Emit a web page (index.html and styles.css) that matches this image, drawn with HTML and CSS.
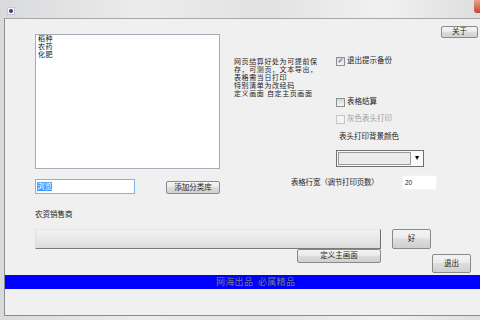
FILE: index.html
```html
<!DOCTYPE html>
<html lang="zh">
  <head>
    <meta charset="UTF-8" />
    <title>农资结算</title>
    <link rel="stylesheet" href="styles.css">
  </head>
  <body>
    <div class="window">
      <!-- Title bar -->
      <div class="titlebar">
        <span class="app-icon"><span class="app-dot"></span></span>
        <span class="close-btn"></span>
      </div>

      <!-- Client area -->
      <div class="client">
        <div class="top">
          <div class="list">
            <div class="item">稻种</div>
            <div class="item">农药</div>
            <div class="item">化肥</div>
          </div>
          <div class="notes">
            <div class="note-line">网页结算好处为可提前保</div>
            <div class="note-line">存，可测页，文本导出，</div>
            <div class="note-line">表格需当日打印</div>
            <div class="note-line">特别清单为改经码</div>
            <div class="note-line">定义画面 自定主页画面</div>
          </div>
          <div class="options">
            <label class="check first"><span class="box checked">✓</span>退出提示备份</label>
            <label class="check second"><span class="box"></span>表格结算</label>
            <label class="check third disabled"><span class="box"></span>灰色表头打印</label>
            <div class="combo-label">表头打印背景颜色</div>
            <div class="combo">
              <span class="combo-field"></span>
              <span class="combo-arrow">▾</span>
            </div>
          </div>
          <button class="btn about">关于</button>
        </div>

        <div class="row-add">
          <div class="text-input focused"><span class="sel">浏览</span></div>
          <button class="btn add">添加分类库</button>
          <span class="width-label">表格行宽（调节打印页数）</span>
          <div class="num-input">20</div>
        </div>

        <div class="dealer-label">农资销售商</div>

        <div class="row-progress">
          <div class="progress"></div>
          <button class="btn ok">好</button>
        </div>

        <div class="row-bottom">
          <button class="btn define">定义主画面</button>
          <button class="btn quit">退出</button>
        </div>

        <div class="banner">网海出品 必属精品</div>
        <div class="spacer"></div>
      </div>
    </div>
  </body>
</html>
```

FILE: styles.css
```css
body {
  margin: 0;
  font-family: "Liberation Sans", "Noto Sans CJK SC", sans-serif;
  font-size: 7.5px;
  color: #1e1e1e;
  background-color: #dcdcdc;
}
.window {
  width: 480px;
  height: 320px;
  overflow: hidden;
  background: linear-gradient(90deg, #d9dadc, #ececec 30%, #e2e2e2 55%, #f1f1f1 80%, #dedede);
}
.titlebar {
  height: 18px;
  display: flex;
  align-items: center;
  justify-content: space-between;
  padding-left: 7px;
}
.app-icon {
  width: 6px;
  height: 6px;
  margin-top: 3px;
  background: #f4f4f8;
  border: 1px solid #c8c8d0;
  display: flex;
  align-items: center;
  justify-content: center;
}
.app-dot {
  width: 4px;
  height: 4px;
  border-radius: 50%;
  background: #4a2f9c;
}
.close-btn {
  width: 6px;
  height: 13px;
  margin-top: -5px;
  background: linear-gradient(#e8a08e, #c8442c);
  border-radius: 0 0 0 3px;
}
.client {
  margin-left: 4px;
  height: 296px;
  background-color: #f0f0f0;
  border-top: 1px solid #a8a8a8;
  border-left: 1px solid #8c8c8c;
  border-bottom: 1px solid #8c8c8c;
  display: flex;
  flex-direction: column;
}

/* upper block */
.top {
  display: flex;
  height: 150px;
  flex-shrink: 0;
}
.list {
  margin: 15px 0 0 30px;
  width: 185px;
  height: 135px;
  box-sizing: border-box;
  background: #ffffff;
  border: 1px solid #a6adb8;
  padding: 0 2px;
  color: #101010;
  font-size: 7px;
  letter-spacing: 0.5px;
}
.item {
  height: 8px;
  line-height: 8px;
}
.notes {
  margin: 39px 0 0 14px;
  width: 86px;
  white-space: nowrap;
  font-size: 7px;
  letter-spacing: 0.6px;
}
.note-line {
  height: 8px;
  line-height: 8px;
}
.options {
  margin-left: 16px;
  width: 105px;
  display: flex;
  flex-direction: column;
  align-items: flex-start;
}
.check {
  display: flex;
  align-items: center;
  gap: 2px;
  height: 10px;
  line-height: 10px;
}
.check.first {
  margin-top: 37px;
}
.check.second {
  margin-top: 31px;
}
.check.third {
  margin-top: 7px;
}
.box {
  width: 7px;
  height: 7px;
  border: 1px solid #8e8f8f;
  background: linear-gradient(#d8d8d8, #f4f4f4);
  font-family: "DejaVu Sans", sans-serif;
  font-size: 7px;
  line-height: 7px;
  color: #2a49a8;
  text-align: center;
  font-weight: bold;
}
.disabled {
  color: #a0a0a0;
}
.disabled .box {
  border-color: #c8c8c8;
  background: #f4f4f4;
}
.combo-label {
  margin: 8px 0 0 3px;
  height: 10px;
  line-height: 10px;
}
.combo {
  margin-top: 8px;
  width: 88px;
  height: 17px;
  box-sizing: border-box;
  border: 1px solid #6e6e6e;
  background: #fafafa;
  display: flex;
  padding: 1px;
  gap: 1px;
}
.combo-field {
  flex: 1;
  border: 1px solid #9a9a9a;
  background: #ebebeb;
}
.combo-arrow {
  width: 10px;
  font-family: "DejaVu Sans", sans-serif;
  font-size: 8px;
  line-height: 12px;
  text-align: center;
  color: #000000;
}

/* buttons */
.btn {
  font-family: inherit;
  font-size: 7.5px;
  color: #1e1e1e;
  padding: 0;
  box-sizing: border-box;
  border: 1px solid #8a8a8a;
  border-radius: 2px;
  background: linear-gradient(#f4f4f4, #ebebeb 45%, #dddddd 50%, #cfcfcf);
  line-height: 10px;
}
.about {
  margin: 7px 0 0 0;
  width: 37px;
  height: 12px;
}
.add {
  margin: 6px 0 0 31px;
  width: 54px;
  height: 13px;
}
.ok {
  margin-left: 11px;
  width: 39px;
  height: 20px;
}
.define {
  width: 84px;
  height: 14px;
  margin-left: 292px;
}
.quit {
  margin: 5px 0 0 51px;
  width: 39px;
  height: 19px;
}

/* second block */
.row-add {
  display: flex;
  align-items: flex-start;
  margin-top: 6px;
  height: 19px;
  flex-shrink: 0;
}
.text-input {
  margin: 4px 0 0 30px;
  width: 100px;
  height: 15px;
  box-sizing: border-box;
  border: 1px solid #7eb4ea;
  background: #ffffff;
  padding: 2px 1px;
  line-height: 9px;
}
.sel {
  background: #3399ff;
  color: #ffffff;
}
.width-label {
  margin: 3px 0 0 71px;
  width: 111px;
  line-height: 10px;
  letter-spacing: -0.2px;
}
.num-input {
  width: 35px;
  height: 15px;
  box-sizing: border-box;
  background: #ffffff;
  border: 1px solid #f4f4f4;
  padding-left: 2px;
  font-size: 6.5px;
  line-height: 13px;
}
.dealer-label {
  margin: 16px 0 0 30px;
  height: 10px;
  line-height: 10px;
  flex-shrink: 0;
}
.row-progress {
  display: flex;
  margin-top: 9px;
  height: 20px;
  flex-shrink: 0;
}
.progress {
  margin-left: 30px;
  width: 346px;
  height: 20px;
  box-sizing: border-box;
  border-top: 1px solid #e6e6e6;
  border-left: 1px solid #e0e0e0;
  border-right: 1px solid #6e6e6e;
  border-bottom: 1px solid #7a7a7a;
  background: linear-gradient(#f2f2f2, #e6e6e6 60%, #dcdcdc);
}
.row-bottom {
  display: flex;
  align-items: flex-start;
  height: 26px;
  flex-shrink: 0;
}
.banner {
  height: 14px;
  background: #0000ff;
  color: #76768a;
  font-size: 9px;
  letter-spacing: 0.3px;
  word-spacing: 2px;
  line-height: 14px;
  padding-left: 211px;
  flex-shrink: 0;
}
.spacer {
  flex: 1;
}
```
